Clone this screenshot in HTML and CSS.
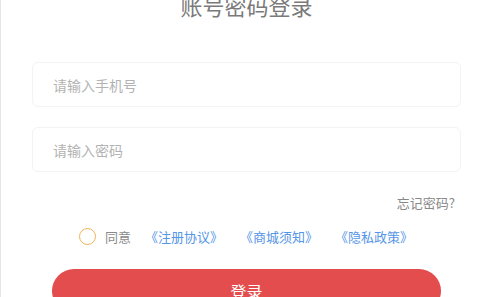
FILE: index.html
```html
<!DOCTYPE html>
<html>
	<head>
		<meta charset="utf-8">
		<title>账号密码登录</title>
		<link rel="stylesheet" href="styles.css">
	</head>
	<body>
		<div class="page">
			<h1 class="title">账号密码登录</h1>

			<!--账号和密码输入框-->
			<div class="form">
				<input type="text" class="field" placeholder="请输入手机号">
				<input type="password" class="field" placeholder="请输入密码">
			</div>

			<div class="forget">忘记密码?</div>

			<!--协议勾选-->
			<div class="agree">
				<span class="radio"></span>
				<span class="agree-text">同意</span>
				<a class="link">《注册协议》</a>
				<a class="link">《商城须知》</a>
				<a class="link">《隐私政策》</a>
			</div>

			<button class="btn">登录</button>
		</div>
	</body>
</html>
```

FILE: styles.css
```css
html, body {
	margin: 0;
	padding: 0;
	background: #fff;
}

body {
	font-family: "Noto Sans CJK SC", "Noto Sans", sans-serif;
	overflow: hidden;
}

.page {
	border-left: 1px solid #e6e6e6;
	height: 297px;
	overflow: hidden;
}

.title {
	margin: -10px 0 0 0;
	font-size: 22px;
	line-height: 30px;
	font-weight: normal;
	color: #7a7a7a;
	text-align: center;
}

.form {
	display: flex;
	flex-direction: column;
	gap: 20px;
	margin: 42px 31px 0 31px;
}

.field {
	box-sizing: border-box;
	height: 45px;
	padding: 0 20px;
	border: 1px solid #f3f3f3;
	border-radius: 6px;
	font-family: inherit;
	font-size: 14px;
	color: #333;
	outline: none;
}

.field::placeholder {
	color: #b3b3b3;
}

.forget {
	margin: 21px 37px 0 0;
	text-align: right;
	font-size: 13px;
	line-height: 20px;
	color: #888;
}

.agree {
	display: flex;
	align-items: center;
	margin-top: 13px;
	padding-left: 78px;
	height: 20px;
	font-size: 13px;
}

.radio {
	box-sizing: border-box;
	width: 17px;
	height: 17px;
	border: 1.5px solid #f0b456;
	border-radius: 50%;
}

.agree-text {
	margin-left: 9px;
	color: #8a8a8a;
}

.link {
	color: #5596e6;
	margin-left: 17px;
}

.agree-text + .link {
	margin-left: 14px;
}

.btn {
	display: block;
	box-sizing: border-box;
	width: 389px;
	height: 44px;
	margin: 23px 0 0 51px;
	border: none;
	border-radius: 22px;
	background: #e44d4d;
	color: #fff;
	font-family: inherit;
	font-size: 16px;
}
```
